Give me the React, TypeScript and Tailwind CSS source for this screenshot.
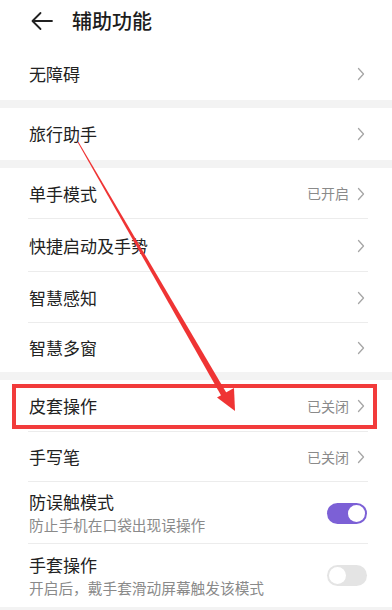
import React from 'react'

const font = { fontFamily: '"Noto Sans CJK SC", "Noto Sans", sans-serif' }

const Chevron = () => (
    <svg width="8" height="14" viewBox="0 0 8 14" className="shrink-0">
        <polyline points="1.5,1.5 6.5,7 1.5,12.5" fill="none" stroke="#a6a6a6" strokeWidth="1.3" strokeLinecap="round" strokeLinejoin="round" />
    </svg>
)

const Row = ({ title, value, h = 'h-[51px]', last = false }: { title: string; value?: string; h?: string; last?: boolean }) => (
    <div className={`${h} flex items-center pl-[29px] pr-[27px] relative`}>
        <span className="text-[17px] text-[#222] flex-1">{title}</span>
        {value && <span className="text-[14px] text-[#8a8a8a] mr-[8px]">{value}</span>}
        <Chevron />
        {!last && <div className="absolute left-[28px] right-[24px] bottom-0 h-px bg-[#ececec]" />}
    </div>
)

const Toggle = ({ on }: { on: boolean }) => (
    <div className={`w-[40px] h-[21px] rounded-full flex items-center px-[2px] ${on ? 'bg-[#7c60d6] justify-end' : 'bg-[#e4e4e4] justify-start'}`}>
        <div className="w-[17px] h-[17px] rounded-full bg-white" />
    </div>
)

const SwitchRow = ({ title, desc, on, h, last = false }: { title: string; desc: string; on: boolean; h: string; last?: boolean }) => (
    <div className={`${h} flex items-center pl-[29px] pr-[25px] relative`}>
        <div className="flex-1 flex flex-col">
            <span className="text-[17px] text-[#222] leading-[24px]">{title}</span>
            <span className="text-[14.7px] text-[#8a8a8a] leading-[22px]">{desc}</span>
        </div>
        <Toggle on={on} />
        {!last && <div className="absolute left-[28px] right-[24px] bottom-0 h-px bg-[#ececec]" />}
    </div>
)

const Gap = () => <div className="h-[8px] bg-[#f3f3f3]" />

export default function App() {
    return (
        <div className="w-[392px] h-[610px] bg-white relative overflow-hidden" style={font}>
            {/* header */}
            <div className="h-[48px] flex items-center pl-[30px] pb-[6px]">
                <svg width="24" height="20" viewBox="0 0 24 20">
                    <path d="M22 10H3M10.5 2L2.5 10L10.5 18" fill="none" stroke="#222" strokeWidth="1.8" strokeLinecap="round" strokeLinejoin="round" />
                </svg>
                <span className="ml-[18px] text-[20px] font-medium text-[#1c1c1c]">辅助功能</span>
            </div>

            <Row title="无障碍" h="h-[52px]" last />
            <Gap />
            <Row title="旅行助手" h="h-[52px]" last />
            <Gap />
            <Row title="单手模式" value="已开启" />
            <Row title="快捷启动及手势" h="h-[53px]" />
            <Row title="智慧感知" />
            <Row title="智慧多窗" h="h-[49px]" last />
            <Gap />

            <div className="relative">
                <Row title="皮套操作" value="已关闭" h="h-[52px]" />
                <div className="absolute left-[12px] w-[365px] top-[4px] h-[45px] border-[4px] border-[#f23b3b]" />
            </div>
            <Row title="手写笔" value="已关闭" h="h-[50px]" />
            <SwitchRow title="防误触模式" desc="防止手机在口袋出现误操作" on h="h-[62px]" />
            <SwitchRow title="手套操作" desc="开启后，戴手套滑动屏幕触发该模式" on={false} h="h-[63px]" last />
            <div className="h-[8px] bg-[#f3f3f3]" />

            {/* annotation arrow */}
            <svg className="absolute inset-0 pointer-events-none" width="392" height="610" viewBox="0 0 392 610">
                <polygon points="77.6,142.3 78.4,141.7 228,395.5 222.8,398.6" fill="#ef3434" />
                <polygon points="235,411 217,397.5 234,388" fill="#ef3434" />
            </svg>
        </div>
    )
}
